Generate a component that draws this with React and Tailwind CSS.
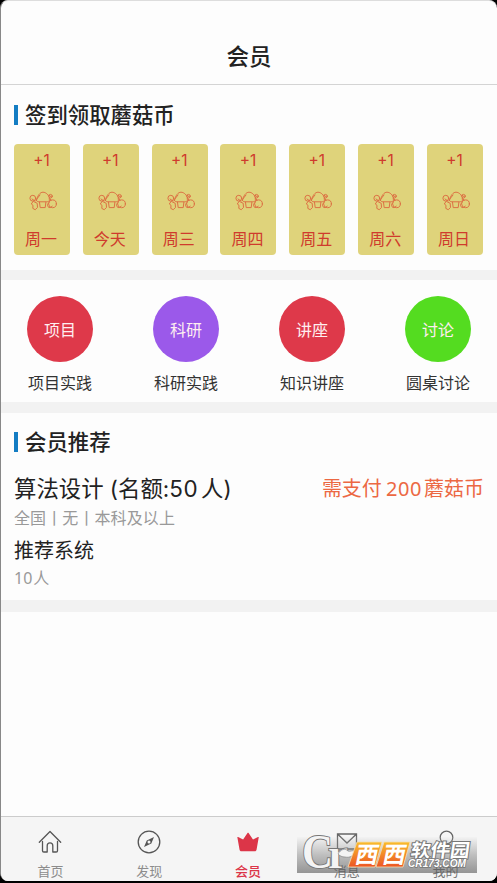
const days = ["周一", "今天", "周三", "周四", "周五", "周六", "周日"];

const categories = [
  { short: "项目", label: "项目实践", color: "bg-[#de394a]" },
  { short: "科研", label: "科研实践", color: "bg-[#9b59ea]" },
  { short: "讲座", label: "知识讲座", color: "bg-[#de394a]" },
  { short: "讨论", label: "圆桌讨论", color: "bg-[#54dc20]" },
];

function Mushrooms() {
  return (
    <svg className="block h-5 w-7" viewBox="0 0 28 20" fill="none" stroke="#dc7144" strokeWidth="1" strokeLinecap="round" strokeLinejoin="round">
      <path d="M7.5 9.5C8.5 4.5 11 1.2 14 1.2S20 4 21 8.5c-.5 1.6-2 2.3-3.5 2.3H10c-1.3 0-2.2-.4-2.5-1.3Z" />
      <path d="M10.5 11.2l.7 5.4h5l.7-5.4M7 9l4-5" />
      <circle cx="3.8" cy="7.2" r="2.9" />
      <path d="M4 10.5 2.3 13l1.7 1.3-.2 3.1 2.4 1.3 2.3-2.2-.3-4.2-3-1.5ZM3 8l3 2" />
      <circle cx="21.5" cy="5.2" r="1.8" />
      <path d="m20.2 4.3 2.4 1.8M20 8l2 .6" />
      <circle cx="23.5" cy="12.8" r="3.9" />
      <path d="M20 11.5c-1.6 1-2 2.7-1 4.2 1.3 1.5 3.3 1.2 4.2-.6" />
    </svg>
  );
}

function HomeIcon() {
  return (
    <svg className="block size-6" viewBox="0 0 24 24" fill="none" stroke="#555" strokeWidth="1.3" strokeLinecap="round" strokeLinejoin="round">
      <path d="M1.3 12.2 12 1.5l10.7 10.7M4.5 11.5v9.2c0 .9.5 1.3 1.3 1.3h3.4v-6.2c0-2 1-2.9 2.8-2.9s2.8.9 2.8 2.9V22h3.4c.8 0 1.3-.4 1.3-1.3v-9.2" />
    </svg>
  );
}

function CompassIcon() {
  return (
    <svg className="block size-6" viewBox="0 0 24 24" fill="none" stroke="#555" strokeWidth="1.3" strokeLinejoin="round">
      <circle cx="12" cy="12" r="10.8" />
      <path d="m17 7-2.7 6.5L7 17l2.8-6.6Z" fill="#555" stroke="none" />
      <circle cx="12" cy="12" r="1.5" fill="#f5f5f5" stroke="none" />
    </svg>
  );
}

function CrownIcon() {
  return (
    <svg className="block size-6" viewBox="0 0 24 24" fill="#dc3548">
      <path d="M1.4 7.6c-.2-.6.2-.8.7-.5l5 2.5L11.500 3c.3-.5.8-.5 1.1 0L17 9.6l5-2.5c.5-.3.9-.1.7.5l-2.1 11.8c-.2 1.2-.8 1.8-1.9 1.8H5.4c-1.1 0-1.7-.6-1.9-1.8Z" />
    </svg>
  );
}

function MailIcon() {
  return (
    <svg className="block size-6" viewBox="0 0 24 24" fill="none" stroke="#666" strokeWidth="1.3">
      <path d="M2.5 4h19v15h-19ZM2.5 4l9.5 9 9.5-9" />
    </svg>
  );
}

function UserIcon() {
  return (
    <svg className="block size-6" viewBox="0 0 24 24" fill="none" stroke="#666" strokeWidth="1.3">
      <circle cx="12.5" cy="7.5" r="6.3" />
      <path d="M2 23c0-5 4-8 10-8s10 3 10 8" />
    </svg>
  );
}

const tabs = [
  { label: "首页", Icon: HomeIcon, tone: "text-[#8c8c8c]" },
  { label: "发现", Icon: CompassIcon, tone: "text-[#8c8c8c]" },
  { label: "会员", Icon: CrownIcon, tone: "font-medium text-[#dc3548]" },
  { label: "消息", Icon: MailIcon, tone: "text-[#777]" },
  { label: "我的", Icon: UserIcon, tone: "text-[#777]" },
];

function SectionTitle({ children }) {
  return (
    <h2 className="flex h-5 items-center gap-[7px] font-['Noto_Sans_CJK_SC',sans-serif] text-[21.4px] font-medium text-[#222]">
      <span className="h-5 w-1 bg-[#147dc3]" />
      <span className="-mt-px">{children}</span>
    </h2>
  );
}

function Watermark() {
  return (
    <div className="absolute top-[837px] left-[297px] h-9 w-[180px] bg-linear-to-b from-[#dddddd]/10 via-[#888888]/50 to-[#555555]/60">
      <svg className="block h-9 w-[180px] overflow-visible" viewBox="0 0 180 36">
        <defs>
          <linearGradient id="orange" x2="0" y2="1">
            <stop stopColor="#f9bd2c" />
            <stop offset="1" stopColor="#ec5524" />
          </linearGradient>
        </defs>
        <g fontFamily="Liberation Serif, serif" fill="#f4f4f4" stroke="#777" strokeWidth="1.8" paintOrder="stroke">
          <text x="5" y="31" fontSize="48" fontWeight="700" textLength="31" lengthAdjust="spacingAndGlyphs">C</text>
          <text x="31" y="31" fontSize="41" fontWeight="700" textLength="20" lengthAdjust="spacingAndGlyphs">r</text>
        </g>
        <path d="M41 17c3-5 7-6 10-3 2 1 4-1 7 0-1 5-5 7-10 6-3 0-5-1-7-3Z" fill="#f4f4f4" stroke="#777" strokeWidth=".6" />
        <path d="M60 5h25l-7 25H51ZM87 5h26l-7 25H79Z" fill="url(#orange)" stroke="#f7dfb2" strokeWidth=".8" />
        <g fontFamily="Noto Sans CJK SC, sans-serif" fontWeight="700" fontSize="23" fill="#fff">
          <text transform="translate(57 26) skewX(-12)">西</text>
          <text transform="translate(84.5 26) skewX(-12)">西</text>
        </g>
        <text transform="translate(113 19.5) skewX(-8)" fontFamily="Noto Sans CJK SC, sans-serif" fontWeight="700" fontSize="18.5" textLength="59" lengthAdjust="spacingAndGlyphs" fill="#fff" stroke="#777" strokeWidth="2" paintOrder="stroke">软件园</text>
        <text x="111" y="29.5" fontFamily="Liberation Sans, sans-serif" fontWeight="700" fontStyle="italic" fontSize="10.5" textLength="58" lengthAdjust="spacingAndGlyphs" fill="#fff" stroke="#777" strokeWidth="1.5" paintOrder="stroke">CR173.COM</text>
      </svg>
    </div>
  );
}

export default function App() {
  return (
    <div className="relative h-[883px] w-[497px] overflow-hidden bg-black pb-0.5 font-['Noto_Sans_CJK_SC',sans-serif]">
      <div className="flex h-full flex-col overflow-hidden rounded-lg border-t border-l border-t-[#ddd] border-l-[#888] bg-[#fdfdfd]">
        <header className="flex h-[84px] shrink-0 items-end justify-center border-b border-[#d4d4d4] pb-[13px]">
          <h1 className="text-[22.5px] leading-8 font-medium text-[#222]">会员</h1>
        </header>

        <section className="h-[185px] shrink-0 px-[13px] pt-5">
          <SectionTitle>签到领取蘑菇币</SectionTitle>
          <div className="mt-[19px] flex w-[469px] justify-between">
            {days.map((day) => (
              <div key={day} className="flex h-[111px] w-14 flex-col items-center rounded bg-[#dfd37b] text-[#cf3b2d]">
                <span className="mt-[7px] -ml-px font-['Inter',sans-serif] text-[15.5px] leading-5">+1</span>
                <span className="mt-5 ml-0.5">
                  <Mushrooms />
                </span>
                <span className="mt-[15px] -ml-0.5 text-[16px] leading-6">{day}</span>
              </div>
            ))}
          </div>
        </section>

        <div className="h-[10px] shrink-0 bg-[#f2f2f2]" />

        <section className="flex h-[122px] shrink-0 justify-between px-[26px] pt-4">
          {categories.map((item) => (
            <div key={item.label} className="flex w-[66px] flex-col items-center">
              <div className={`flex size-[66px] shrink-0 items-center justify-center rounded-full text-[16px] text-[#ffeef0] ${item.color}`}>{item.short}</div>
              <span className="mt-2 text-[16px] leading-6 whitespace-nowrap text-[#333]">{item.label}</span>
            </div>
          ))}
        </section>

        <div className="h-[11px] shrink-0 bg-[#f2f2f2]" />

        <section className="h-[187px] shrink-0 px-[13px] pt-[19px] font-['Inter','Noto_Sans_CJK_SC',sans-serif]">
          <SectionTitle>会员推荐</SectionTitle>
          <div className="mt-[21px] flex h-8 items-center justify-between">
            <span className="text-[22.4px] text-[#222]">
              算法设计 (名额:<span className="mr-[3px] tracking-[0.5px]">50</span>人)
            </span>
            <span className="text-[20px] text-[#ec6843]">
              需支付<span className="mr-0.5 ml-1 font-['Noto_Sans',sans-serif] tracking-[0.6px]">200</span>蘑菇币
            </span>
          </div>
          <p className="mt-px text-[16px] leading-6 tracking-[0.1px] text-[#999]">全国丨无丨本科及以上</p>
          <p className="mt-[5px] text-[20px] leading-8 text-[#222]">推荐系统</p>
          <p className="-mt-px text-[16px] leading-6 text-[#999]">
            <span className="mr-px font-['Noto_Sans',sans-serif]">10</span>人
          </p>
        </section>

        <div className="h-3 shrink-0 bg-[#f2f2f2]" />
        <div className="flex-1" />

        <nav className="flex h-[65px] shrink-0 border-t border-[#ccc] bg-[#f5f5f5] pt-[13px] pr-0.5">
          {tabs.map(({ label, Icon, tone }) => (
            <div key={label} className="flex flex-1 flex-col items-center">
              <Icon />
              <span className={`mt-2 text-[13px] leading-[18px] ${tone}`}>{label}</span>
            </div>
          ))}
        </nav>
      </div>
      <Watermark />
    </div>
  );
}
